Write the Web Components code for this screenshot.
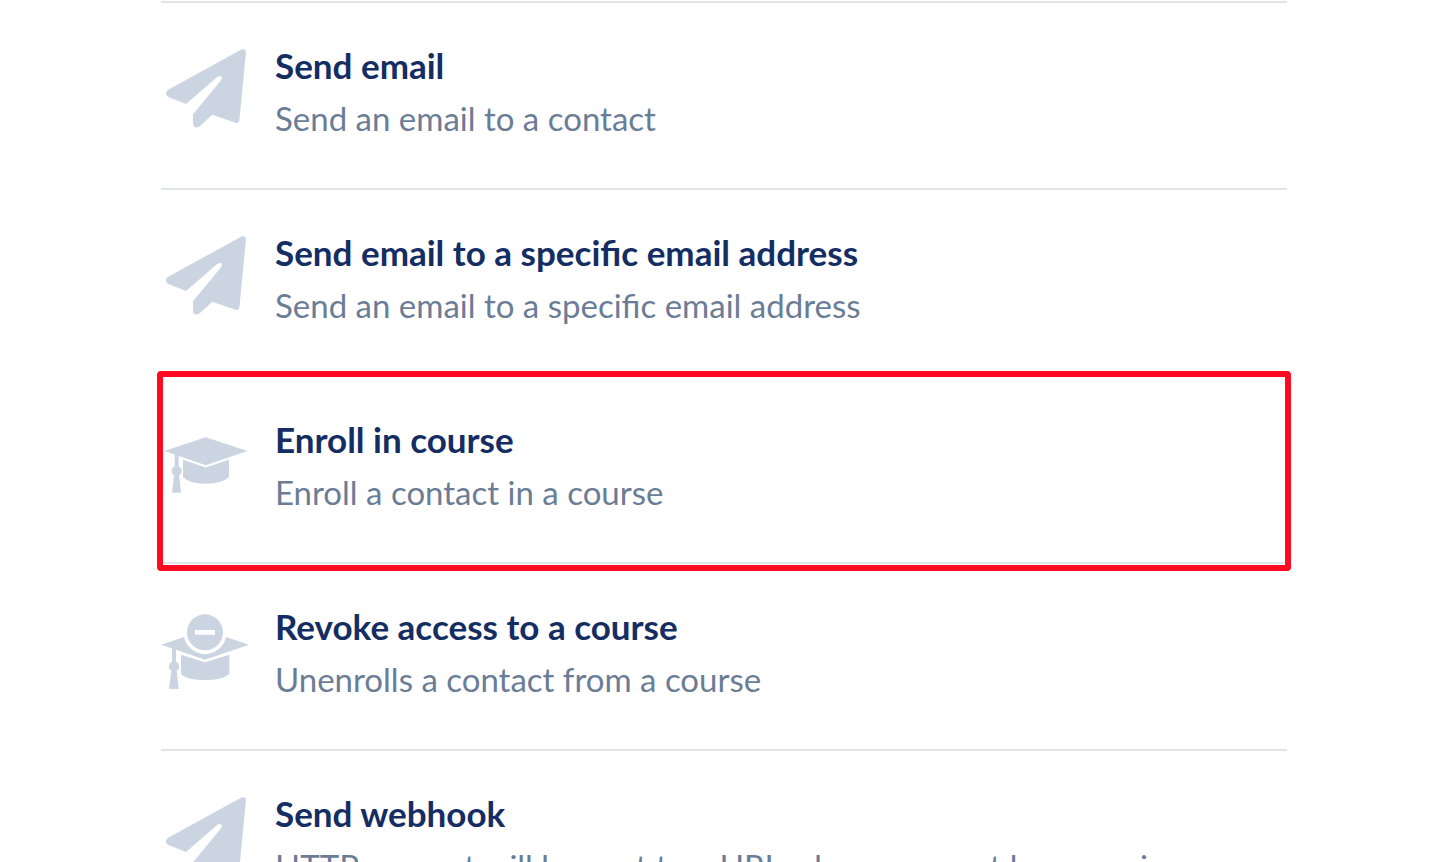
<!DOCTYPE html>
<html lang="en">
<head>
<meta charset="utf-8">
<meta name="viewport" content="width=device-width,initial-scale=1">
<title>Actions</title>
<style>
html,body{margin:0;height:100%;background:#fff}
body{overflow:hidden;font-family:Lato,"Liberation Sans",sans-serif}
</style>
</head>
<body>
<action-list>
  <action-item icon="plane">Send email<span slot="description">Send an email to a contact</span></action-item>
  <action-item icon="plane">Send email to a specific email address<span slot="description">Send an email to a specific email address</span></action-item>
  <action-item icon="cap" highlighted>Enroll in course<span slot="description">Enroll a contact in a course</span></action-item>
  <action-item icon="revoke">Revoke access to a course<span slot="description">Unenrolls a contact from a course</span></action-item>
  <action-item icon="plane">Send webhook<span slot="description">HTTP request will be sent to a URL when an event happens in</span></action-item>
</action-list>
<script>
const icons={
plane:`<path d="M80.5 4.5Q85.5 3 84.8 9L78.5 74Q78 79 73.5 77.6L51.3 69.7 39.5 80.5Q36.5 83.5 34 82.2 32 81.3 32 78.5V69.3L60.3 35Q61.5 33 60.2 31.6 58.7 30.3 56.5 31.8L25 59 8.5 52.6Q5 51 5 48.2 5 45.8 8.5 44Z"/>`,
cap:`<path d="M3.3 32 44.7 18.3 86.6 32 44.7 46.3 17.7 37V47.3A5 5 0 0 1 18.2 56.3L20 73.7H11L13 56.3A5 5 0 0 1 13.7 47.3V35.6Z"/>
<path d="M22 40.7 44.7 48.5 68 40.7V58Q61 64.7 44.7 64.7T22 58Z"/>`,
revoke:`<path fill-rule="evenodd" d="M44 8.3a18 18 0 1 0 0 36 18 18 0 0 0 0-36ZM34 24H54V28.7H34Z"/>
<path d="M0 38.7 23 31A21.5 21.5 0 0 0 65 31L88 38.7 44 53.7 15 43.8V55.7A5 5 0 0 1 15.7 64.7L17.7 83H8L10.3 64.7A5 5 0 0 1 11 55.7V42.4Z"/>
<path d="M20 48.7 44 56.3 68.3 48.7V68Q62 74 44 74T20 68Z"/>`
};

class ActionIcon extends HTMLElement{
static get observedAttributes(){return ['name']}
constructor(){
  super();
  this.attachShadow({mode:'open'});
}
attributeChangedCallback(){
  this.shadowRoot.innerHTML=`<style>
:host{display:block;width:88px;height:88px;color:#cbd5e1}
svg{display:block;width:100%;height:100%}
</style><svg viewBox="0 0 88 88" fill="currentColor" aria-hidden="true">${icons[this.getAttribute('name')]||''}</svg>`;
}
}

class ActionItem extends HTMLElement{
constructor(){
  super();
  this.attachShadow({mode:'open'}).innerHTML=`<style>
:host{display:block;position:relative;border-top:2px solid #e2e5e8}
button{display:flex;align-items:flex-start;gap:26px;width:100%;margin:0;padding:36px 0 43px;border:0;background:none;font:inherit;text-align:left;cursor:pointer}
action-icon{flex:none;margin-top:6px}
.text{display:flex;flex-direction:column;flex:1;min-width:0}
.title{font-size:35px;line-height:53px;font-weight:700;color:#142d63}
.description{font-size:33px;line-height:53px;color:#6b7d96}
:host([highlighted])::after{content:"";position:absolute;z-index:1;inset:-6px -4px -9px;border:6px solid #ff0a20;border-radius:4px;pointer-events:none}
</style><button type="button"><action-icon></action-icon><span class="text"><span class="title"><slot></slot></span><span class="description"><slot name="description"></slot></span></span></button>`;
}
connectedCallback(){
  this.setAttribute('role','listitem');
  this.shadowRoot.querySelector('action-icon').setAttribute('name',this.getAttribute('icon'));
}
}

class ActionList extends HTMLElement{
constructor(){
  super();
  this.attachShadow({mode:'open'}).innerHTML=`<style>
:host{display:block;padding:1px 167px 0 161px}
</style><slot></slot>`;
}
connectedCallback(){
  this.setAttribute('role','list');
}
}

customElements.define('action-icon',ActionIcon);
customElements.define('action-item',ActionItem);
customElements.define('action-list',ActionList);
</script>
</body>
</html>
